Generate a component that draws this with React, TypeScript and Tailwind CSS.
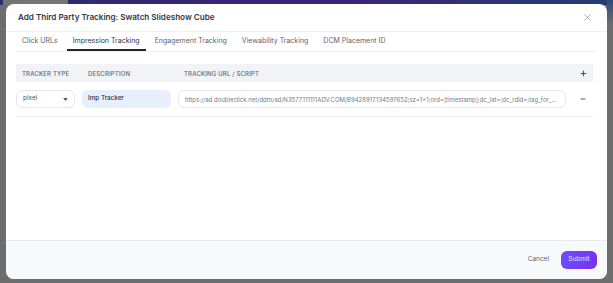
import React from "react";

export default function App() {
  const url =
    "https://ad.doubleclick.net/ddm/ad/N3577.111111ADV.COM/B9428917.134597652;sz=1×1;ord=[timestamp];dc_lat=;dc_rdid=;tag_for_child_directed_treatment=;tfua=;ltd=?";
  const tabs = ["Click URLs", "Impression Tracking", "Engagement Tracking", "Viewability Tracking", "DCM Placement ID"];
  return (
    <div
      className="relative h-[283px] w-[613px] overflow-hidden bg-[#6d6d6d] pt-[4px] pl-[6px]"
      style={{ fontFamily: "Inter, 'Noto Sans', sans-serif" }}
    >
      <div className="absolute left-0 top-0 h-[5px] w-full bg-gradient-to-r from-[#2a2f70] via-[#3d1f76] to-[#233c73]" />
      <div className="absolute left-[3px] top-0 h-[5px] w-[65px] bg-[#747474]" />
      <div className="absolute right-0 top-0 h-[24px] w-[6px] bg-gradient-to-b from-[#2a4a78] to-[#6d6d6d]" />
      <div className="relative flex h-[275px] w-[601px] flex-col overflow-hidden rounded-[8px] bg-white">
        {/* header */}
        <div className="flex h-[28px] shrink-0 items-center justify-between border-b border-[#eef0f4] pl-[12px] pr-[16px]">
          <span className="text-[8.1px] font-semibold text-[#2f3746]">Add Third Party Tracking: Swatch Slideshow Cube</span>
          <svg width="7" height="7" viewBox="0 0 10 10" className="text-[#9aa1ad]">
            <path d="M1 1L9 9M9 1L1 9" stroke="currentColor" strokeWidth="1.2" strokeLinecap="round" />
          </svg>
        </div>
        {/* body */}
        <div className="flex flex-1 flex-col pl-[10px] pr-[10px]">
          <div className="flex h-[20px] items-stretch gap-[3px] border-b border-[#eceff3]">
            {tabs.map((t, i) => (
              <div
                key={t}
                className={
                  i === 1
                    ? "flex items-center border-b-2 border-[#1f2430] px-[6px] pt-[2px] text-[7px] text-[#2f3746]"
                    : "flex items-center border-b-2 border-transparent px-[6px] pt-[2px] text-[7px] text-[#5b6472]"
                }
              >
                {t}
              </div>
            ))}
          </div>
          <div className="mt-[12px] mr-[4px]">
            <div className="grid h-[18px] grid-cols-[59px_89px_1fr_20px] items-center gap-x-[7px] bg-[#f1f3f6]">
              <span className="pl-[6px] text-[6px] font-medium uppercase tracking-[0.03em] text-[#5f6775]">Tracker Type</span>
              <span className="pl-[6px] text-[6px] font-medium uppercase tracking-[0.03em] text-[#5f6775]">Description</span>
              <span className="pl-[6px] text-[6px] font-medium uppercase tracking-[0.03em] text-[#5f6775]">Tracking URL / Script</span>
              <span className="flex justify-center">
                <svg width="7" height="7" viewBox="0 0 10 10">
                  <path d="M5 1V9M1 5H9" stroke="#4b5261" strokeWidth="1.6" />
                </svg>
              </span>
            </div>
            <div className="grid grid-cols-[59px_89px_1fr_20px] items-center gap-x-[7px] border-b border-[#f0f1f4] py-[8px]">
              <div className="flex h-[18px] items-center justify-between rounded-[6px] border border-[#e4e7ec] pl-[6px] pr-[6px]">
                <span className="text-[6.5px] text-[#4b5261]">pixel</span>
                <svg width="5" height="3" viewBox="0 0 6 4">
                  <path d="M0 0H6L3 4Z" fill="#4b5261" />
                </svg>
              </div>
              <div className="flex h-[18px] items-center rounded-[6px] bg-[#e7effd] pl-[6px]">
                <span className="text-[6.3px] font-medium text-[#2b3140]">Imp Tracker</span>
              </div>
              <div className="flex h-[18px] min-w-0 items-center rounded-[6px] border border-[#e4e7ec] pl-[6px] pr-[8px]">
                <span className="truncate text-[6px] text-[#737b88]">{url}</span>
              </div>
              <span className="flex justify-center">
                <svg width="6" height="6" viewBox="0 0 10 10">
                  <path d="M1 5H9" stroke="#4b5261" strokeWidth="1.6" />
                </svg>
              </span>
            </div>
          </div>
        </div>
        {/* footer */}
        <div className="flex h-[39px] shrink-0 items-center justify-end gap-[5px] border-t border-[#e8ecf2] bg-[#f8f9fb] pr-[10px]">
          <button className="px-[7px] text-[6.5px] text-[#5b6472]">Cancel</button>
          <button className="h-[18px] w-[36px] rounded-[6px] bg-gradient-to-r from-[#6a4cff] to-[#7a2ff0] text-[6.5px] text-[#ece6ff]">
            Submit
          </button>
        </div>
      </div>
    </div>
  );
}
